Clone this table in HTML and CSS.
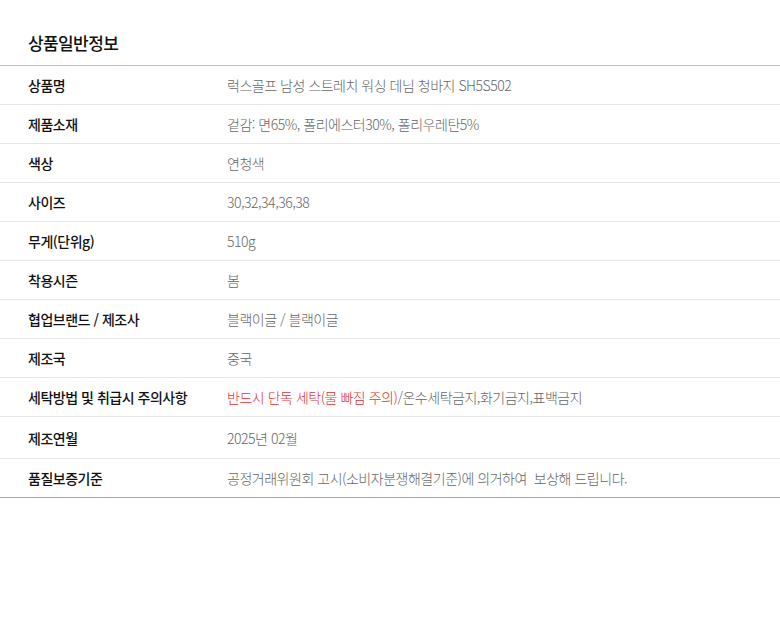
FILE: index.html
```html
<!DOCTYPE html>
<html lang="ko">
<head>
<meta charset="utf-8">
<link rel="stylesheet" href="styles.css">
</head>
<body>
<section class="info">
  <h2 class="info-title">상품일반정보</h2>
  <div class="info-table">
    <div class="row"><div class="label">상품명</div><div class="value">럭스골프 남성 스트레치 워싱 데님 청바지 SH5S502</div></div>
    <div class="row"><div class="label">제품소재</div><div class="value">겉감: 면65%, 폴리에스터30%, 폴리우레탄5%</div></div>
    <div class="row"><div class="label">색상</div><div class="value">연청색</div></div>
    <div class="row"><div class="label">사이즈</div><div class="value">30,32,34,36,38</div></div>
    <div class="row"><div class="label">무게(단위g)</div><div class="value">510g</div></div>
    <div class="row"><div class="label">착용시즌</div><div class="value">봄</div></div>
    <div class="row"><div class="label">협업브랜드 / 제조사</div><div class="value">블랙이글 / 블랙이글</div></div>
    <div class="row"><div class="label">제조국</div><div class="value">중국</div></div>
    <div class="row"><div class="label">세탁방법 및 취급시 주의사항</div><div class="value"><span class="warn">반드시 단독 세탁(물 빠짐 주의)</span>/온수세탁금지,화기금지,표백금지</div></div>
    <div class="row row-tall"><div class="label">제조연월</div><div class="value">2025년 02월</div></div>
    <div class="row"><div class="label">품질보증기준</div><div class="value">공정거래위원회 고시(소비자분쟁해결기준)에 의거하여&nbsp; 보상해 드립니다.</div></div>
  </div>
</section>
</body>
</html>
```
FILE: styles.css
```css
html, body {
  margin: 0;
  padding: 0;
  background: #fff;
}
body {
  font-family: "Noto Sans CJK KR", "Noto Sans", sans-serif;
  color: #111;
}
.info-title {
  margin: 0;
  padding: 31px 28px 10px;
  font-size: 17px;
  line-height: 24px;
  font-weight: 500;
  letter-spacing: -0.6px;
  color: #111;
}
.info-table {
  border-top: 1px solid #bdbdbd;
  border-bottom: 1px solid #a8a8a8;
}
.row {
  display: grid;
  grid-template-columns: 199px 1fr;
  align-items: center;
  height: 38px;
  padding-left: 28px;
  font-size: 14px;
  letter-spacing: -0.48px;
}
.row-tall {
  height: 41px;
}
.row + .row {
  border-top: 1px solid #e6e6e6;
}
.label {
  font-weight: 500;
  color: #111;
}
.value {
  font-weight: 300;
  color: #666;
}
.warn {
  color: #e03131;
}
```
